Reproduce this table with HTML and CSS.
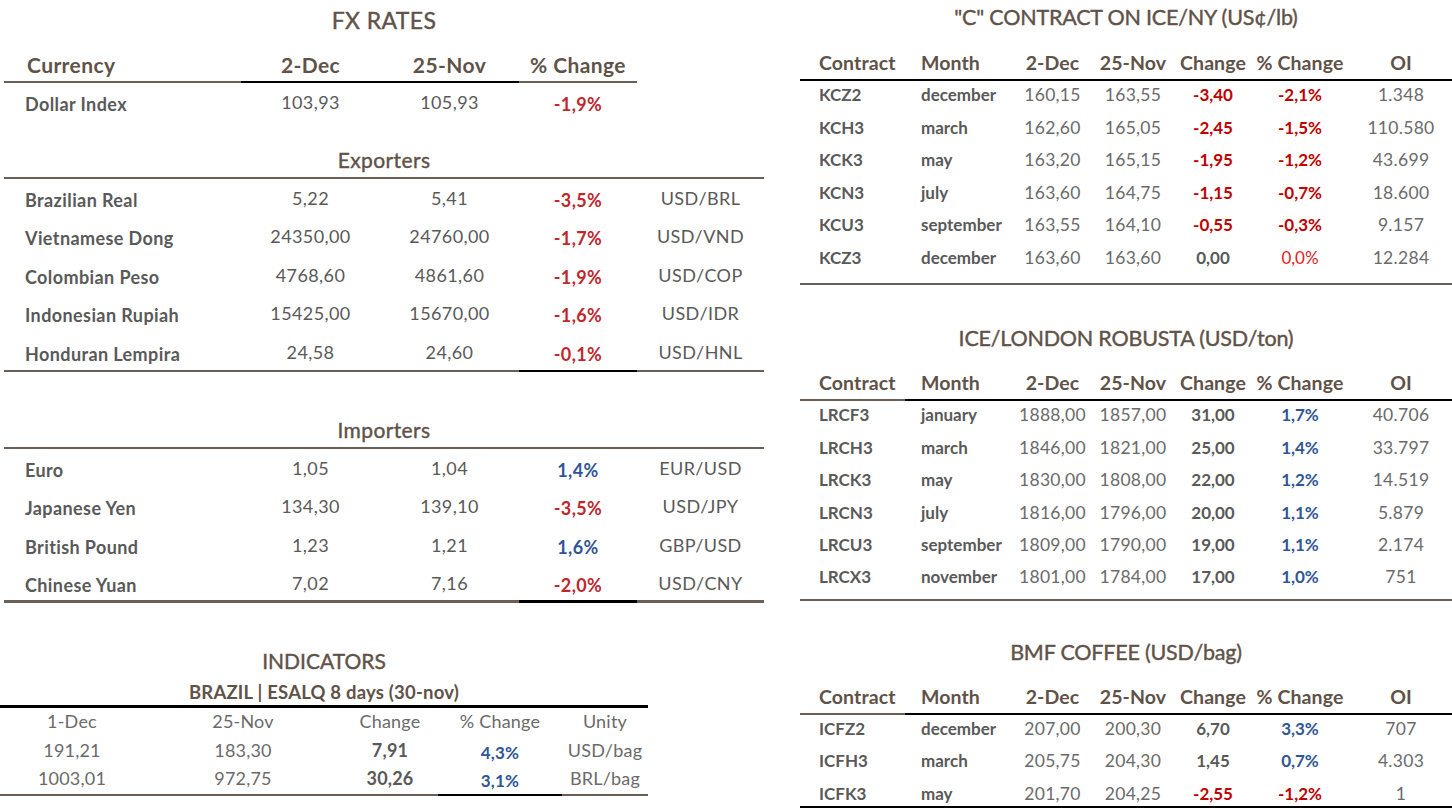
FILE: index.html
```html
<!DOCTYPE html>
<html lang="en">
<head>
<meta charset="utf-8">
<title>Market Report</title>
<link rel="stylesheet" href="styles.css">
</head>
<body>
<div class="page">
  <section class="left">
    <div class="fx">
      <h1 class="fx-title">FX RATES</h1>
      <div class="fx-head">
        <div class="c-name b-brown">Currency</div>
        <div class="b-black">2-Dec</div>
        <div class="b-black">25-Nov</div>
        <div class="b-brown">% Change</div>
      </div>
      <div class="fx-row dollar">
        <div class="c-name">Dollar Index</div>
        <div class="num">103,93</div>
        <div class="num">105,93</div>
        <div class="pct neg">-1,9%</div>
        <div class="unit"></div>
      </div>

      <h2 class="group-title exp">Exporters</h2>
      <div class="group">
        <div class="fx-row"><div class="c-name">Brazilian Real</div><div class="num">5,22</div><div class="num">5,41</div><div class="pct neg">-3,5%</div><div class="unit">USD/BRL</div></div>
        <div class="fx-row"><div class="c-name">Vietnamese Dong</div><div class="num">24350,00</div><div class="num">24760,00</div><div class="pct neg">-1,7%</div><div class="unit">USD/VND</div></div>
        <div class="fx-row"><div class="c-name">Colombian Peso</div><div class="num">4768,60</div><div class="num">4861,60</div><div class="pct neg">-1,9%</div><div class="unit">USD/COP</div></div>
        <div class="fx-row"><div class="c-name">Indonesian Rupiah</div><div class="num">15425,00</div><div class="num">15670,00</div><div class="pct neg">-1,6%</div><div class="unit">USD/IDR</div></div>
        <div class="fx-row"><div class="c-name">Honduran Lempira</div><div class="num">24,58</div><div class="num">24,60</div><div class="pct neg">-0,1%</div><div class="unit">USD/HNL</div></div>
      </div>

      <h2 class="group-title imp">Importers</h2>
      <div class="group importers">
        <div class="fx-row"><div class="c-name">Euro</div><div class="num">1,05</div><div class="num">1,04</div><div class="pct pos">1,4%</div><div class="unit">EUR/USD</div></div>
        <div class="fx-row"><div class="c-name">Japanese Yen</div><div class="num">134,30</div><div class="num">139,10</div><div class="pct neg">-3,5%</div><div class="unit">USD/JPY</div></div>
        <div class="fx-row"><div class="c-name">British Pound</div><div class="num">1,23</div><div class="num">1,21</div><div class="pct pos">1,6%</div><div class="unit">GBP/USD</div></div>
        <div class="fx-row"><div class="c-name">Chinese Yuan</div><div class="num">7,02</div><div class="num">7,16</div><div class="pct neg">-2,0%</div><div class="unit">USD/CNY</div></div>
      </div>
    </div>

    <div class="ind">
      <h2 class="ind-title">INDICATORS</h2>
      <div class="ind-sub">BRAZIL | ESALQ 8 days (30-nov)</div>
      <div class="ind-row">
        <div>1-Dec</div><div>25-Nov</div><div>Change</div><div>% Change</div><div>Unity</div>
      </div>
      <div class="ind-row">
        <div>191,21</div><div>183,30</div><div class="bold">7,91</div><div class="pct pos">4,3%</div><div>USD/bag</div>
      </div>
      <div class="ind-row">
        <div>1003,01</div><div>972,75</div><div class="bold">30,26</div><div class="pct pos">3,1%</div><div>BRL/bag</div>
      </div>
    </div>
  </section>

  <section class="right">
    <div class="ct ice">
      <h2 class="ct-title">"C" CONTRACT ON ICE/NY (US¢/lb)</h2>
      <div class="ct-head">
        <div class="code">Contract</div><div class="month">Month</div><div>2-Dec</div><div>25-Nov</div><div>Change</div><div>% Change</div><div>OI</div>
      </div>
      <div class="ct-rows">
        <div class="ct-row"><div class="code">KCZ2</div><div class="month">december</div><div class="num">160,15</div><div class="num">163,55</div><div class="chg neg">-3,40</div><div class="pct neg">-2,1%</div><div class="num">1.348</div></div>
        <div class="ct-row"><div class="code">KCH3</div><div class="month">march</div><div class="num">162,60</div><div class="num">165,05</div><div class="chg neg">-2,45</div><div class="pct neg">-1,5%</div><div class="num">110.580</div></div>
        <div class="ct-row"><div class="code">KCK3</div><div class="month">may</div><div class="num">163,20</div><div class="num">165,15</div><div class="chg neg">-1,95</div><div class="pct neg">-1,2%</div><div class="num">43.699</div></div>
        <div class="ct-row"><div class="code">KCN3</div><div class="month">july</div><div class="num">163,60</div><div class="num">164,75</div><div class="chg neg">-1,15</div><div class="pct neg">-0,7%</div><div class="num">18.600</div></div>
        <div class="ct-row"><div class="code">KCU3</div><div class="month">september</div><div class="num">163,55</div><div class="num">164,10</div><div class="chg neg">-0,55</div><div class="pct neg">-0,3%</div><div class="num">9.157</div></div>
        <div class="ct-row"><div class="code">KCZ3</div><div class="month">december</div><div class="num">163,60</div><div class="num">163,60</div><div class="chg">0,00</div><div class="pct zero">0,0%</div><div class="num">12.284</div></div>
      </div>
    </div>

    <div class="ct robusta">
      <h2 class="ct-title">ICE/LONDON ROBUSTA (USD/ton)</h2>
      <div class="ct-head split">
        <div class="code">Contract</div><div class="month">Month</div><div>2-Dec</div><div>25-Nov</div><div>Change</div><div>% Change</div><div>OI</div>
      </div>
      <div class="ct-rows">
        <div class="ct-row"><div class="code">LRCF3</div><div class="month">january</div><div class="num">1888,00</div><div class="num">1857,00</div><div class="chg">31,00</div><div class="pct pos">1,7%</div><div class="num">40.706</div></div>
        <div class="ct-row"><div class="code">LRCH3</div><div class="month">march</div><div class="num">1846,00</div><div class="num">1821,00</div><div class="chg">25,00</div><div class="pct pos">1,4%</div><div class="num">33.797</div></div>
        <div class="ct-row"><div class="code">LRCK3</div><div class="month">may</div><div class="num">1830,00</div><div class="num">1808,00</div><div class="chg">22,00</div><div class="pct pos">1,2%</div><div class="num">14.519</div></div>
        <div class="ct-row"><div class="code">LRCN3</div><div class="month">july</div><div class="num">1816,00</div><div class="num">1796,00</div><div class="chg">20,00</div><div class="pct pos">1,1%</div><div class="num">5.879</div></div>
        <div class="ct-row"><div class="code">LRCU3</div><div class="month">september</div><div class="num">1809,00</div><div class="num">1790,00</div><div class="chg">19,00</div><div class="pct pos">1,1%</div><div class="num">2.174</div></div>
        <div class="ct-row"><div class="code">LRCX3</div><div class="month">november</div><div class="num">1801,00</div><div class="num">1784,00</div><div class="chg">17,00</div><div class="pct pos">1,0%</div><div class="num">751</div></div>
      </div>
    </div>

    <div class="ct bmf">
      <h2 class="ct-title">BMF COFFEE (USD/bag)</h2>
      <div class="ct-head split">
        <div class="code">Contract</div><div class="month">Month</div><div>2-Dec</div><div>25-Nov</div><div>Change</div><div>% Change</div><div>OI</div>
      </div>
      <div class="ct-rows">
        <div class="ct-row"><div class="code">ICFZ2</div><div class="month">december</div><div class="num">207,00</div><div class="num">200,30</div><div class="chg">6,70</div><div class="pct pos">3,3%</div><div class="num">707</div></div>
        <div class="ct-row"><div class="code">ICFH3</div><div class="month">march</div><div class="num">205,75</div><div class="num">204,30</div><div class="chg">1,45</div><div class="pct pos">0,7%</div><div class="num">4.303</div></div>
        <div class="ct-row"><div class="code">ICFK3</div><div class="month">may</div><div class="num">201,70</div><div class="num">204,25</div><div class="chg neg">-2,55</div><div class="pct neg">-1,2%</div><div class="num">1</div></div>
      </div>
    </div>
  </section>
</div>
</body>
</html>
```

FILE: styles.css
```css
* { box-sizing: border-box; }

html, body {
  margin: 0;
  padding: 0;
  background: #ffffff;
}

body {
  font-family: Lato, "Open Sans", "Liberation Sans", sans-serif;
  color: #595959;
  width: 1452px;
  height: 809px;
  overflow: hidden;
}

h1, h2 { margin: 0; font-weight: 400; }

.page {
  display: flex;
  gap: 30px;
}

.neg { color: #c0272d; }
.pos { color: #2f5597; }

/* ---------- LEFT ---------- */
.left {
  width: 770px;
  flex: none;
}

.fx {
  margin-left: 4px;
  width: 760px;
  letter-spacing: 0.4px;
}

.fx-title {
  height: 40px;
  line-height: 40px;
  text-align: center;
  font-size: 23px;
  color: #5f5248;
  -webkit-text-stroke: 0.4px #5f5248;
}

.fx-head {
  margin-top: 9px;
  width: 633px;
  display: grid;
  grid-template-columns: 237px 139px 139px 118px;
}

.fx-head > div {
  height: 34px;
  line-height: 32px;
  text-align: center;
  font-size: 21px;
  font-weight: 700;
  color: #5f5248;
  border-bottom: 2px solid #6b5e54;
}

.fx-head > .b-black { border-bottom-color: #000; }

.fx-head > .c-name { text-align: left; padding-left: 23px; }

.fx-row {
  display: grid;
  grid-template-columns: 237px 139px 139px 118px 127px;
  height: 38.5px;
  align-items: end;
}

.fx-row.dollar { height: 39px; }

.fx-row > div {
  font-size: 18px;
  line-height: 24px;
  padding-bottom: 6px;
  text-align: center;
}

.fx-row > .c-name {
  text-align: left;
  padding-left: 21px;
  font-weight: 700;
  color: #595959;
}

.fx-row > .num,
.fx-row > .unit { padding-bottom: 8px; }

.fx-row > .pct { font-weight: 700; }

.group-title {
  height: 36px;
  line-height: 34px;
  text-align: center;
  font-size: 21px;
  color: #5f5248;
  -webkit-text-stroke: 0.4px #5f5248;
  border-bottom: 2px solid #6b5e54;
}

.group-title.exp { margin-top: 21px; }
.group-title.imp { margin-top: 41.5px; }

.group .fx-row:last-child > div {
  border-bottom: 2px solid #6b5e54;
  padding-bottom: 4px;
}

.group .fx-row:last-child > .num,
.group .fx-row:last-child > .unit { padding-bottom: 6px; }

.group .fx-row:last-child > .pct { border-bottom-color: #000; }

.group.importers .fx-row:last-child > div {
  border-bottom-width: 3px;
  padding-bottom: 3px;
}

.group.importers .fx-row:last-child > .num,
.group.importers .fx-row:last-child > .unit { padding-bottom: 5px; }

/* indicators */
.ind {
  width: 648px;
  margin-top: 43px;
}

.ind-title {
  height: 30px;
  line-height: 30px;
  text-align: center;
  font-size: 21px;
  color: #5f5248;
  -webkit-text-stroke: 0.4px #5f5248;
}

.ind-sub {
  margin-top: 3px;
  height: 29px;
  line-height: 26px;
  text-align: center;
  font-size: 18.5px;
  font-weight: 700;
  letter-spacing: 0.2px;
  color: #5f5248;
  border-bottom: 3px solid #000;
}

.ind-row {
  display: grid;
  grid-template-columns: 144px 198px 96px 124px 86px;
  height: 29px;
  align-items: end;
}

.ind-row > div {
  font-size: 18px;
  line-height: 24px;
  padding-bottom: 4px;
  text-align: center;
  color: #6a6a6a;
  letter-spacing: 0.2px;
}

.ind-row > .bold { font-weight: 700; color: #595959; }
.ind-row > .pct { padding-bottom: 1px; font-size: 17px; font-weight: 700; color: #2f5597; }

.ind-row:last-child > div { border-bottom: 2px solid #6b5e54; }
.ind-row:last-child > .pct { border-bottom-color: #000; }

/* ---------- RIGHT ---------- */
.right {
  width: 652px;
  flex: none;
}

.ct-title {
  height: 34px;
  line-height: 34px;
  text-align: center;
  font-size: 21.5px;
  color: #5f5248;
  -webkit-text-stroke: 0.4px #5f5248;
  letter-spacing: -0.2px;
}

.ct-head,
.ct-row {
  display: grid;
  grid-template-columns: 105px 110px 75px 86px 74px 100px 102px;
}

.ct-head > div {
  height: 35px;
  line-height: 33px;
  text-align: center;
  font-size: 19.5px;
  font-weight: 700;
  letter-spacing: 0.1px;
  color: #5f5248;
  border-bottom: 2px solid #000;
  white-space: nowrap;
}

.ct-head.split > .code { border-bottom-color: #6b5e54; }

.ct-head > .code,
.ct-row > .code { text-align: left; padding-left: 19px; }

.ct-head > .month,
.ct-row > .month { text-align: left; padding-left: 16px; }

.ct-rows {
  border-bottom: 2px solid #6b5e54;
}

.ct-row { height: 32.6px; }

.ct-row > div {
  font-size: 17px;
  line-height: 28px;
  text-align: center;
  white-space: nowrap;
  color: #6a6a6a;
}

.ct-row > .num { font-size: 17.5px; letter-spacing: 0.3px; }

.ct-row > .code,
.ct-row > .month { font-weight: 700; color: #595959; }

.ct-row > .chg { font-weight: 700; color: #595959; }
.ct-row > .pct { font-weight: 700; }
.ct-row > .neg { color: #c00000; }
.ct-row > .pos { color: #2f5597; }
.ct-row > .zero { color: #e8191f; font-weight: 400; }

.ice .ct-head { margin-top: 12px; }
.ice .ct-rows { padding-bottom: 6.4px; }

.robusta { margin-top: 36.4px; }
.robusta .ct-head { margin-top: 11px; }
.robusta .ct-row { height: 32.4px; }
.robusta .ct-rows { padding-bottom: 3px; }

.bmf { margin-top: 34px; }
.bmf .ct-head { margin-top: 11px; }
.bmf .ct-row { height: 32.5px; }
.bmf .ct-row:last-child { height: 26px; }
.bmf .ct-rows { border-bottom-color: #000; }
```
